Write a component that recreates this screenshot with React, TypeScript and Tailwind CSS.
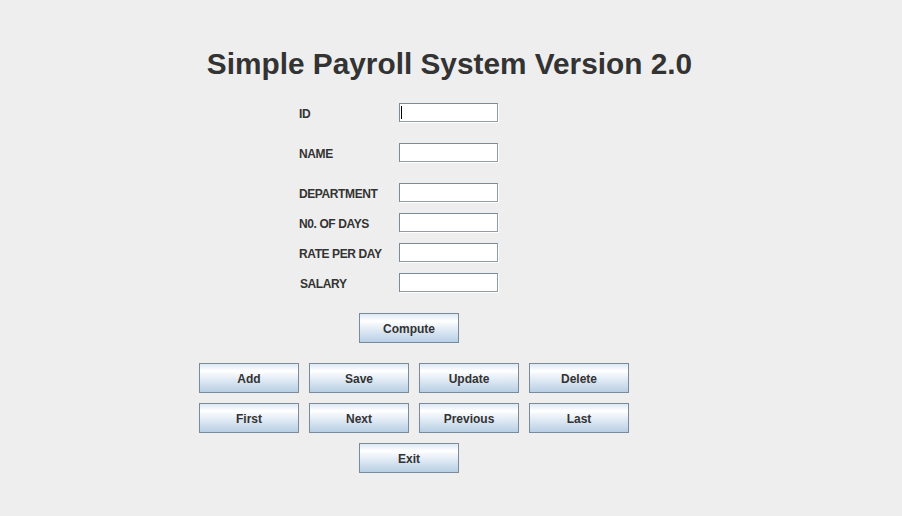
const fields = [
  { label: "ID", mt: "mt-0", caret: true },
  { label: "NAME", mt: "mt-[21px]" },
  { label: "DEPARTMENT", mt: "mt-[21px]" },
  { label: "N0. OF DAYS", mt: "mt-[11px]" },
  { label: "RATE PER DAY", mt: "mt-[11px]" },
  { label: "SALARY", mt: "mt-[11px]", shift: true },
];

function SwingButton({ label }: { label: string }) {
  return (
    <button className="w-[100px] h-[30px] border border-[#7a8a99] bg-[linear-gradient(to_bottom,#dde8f3_0%,#ffffff_25%,#e6eef7_50%,#b8cfe5_100%)] text-[12px] font-bold text-[#333333] flex items-center justify-center pt-px">
      {label}
    </button>
  );
}

export default function App() {
  return (
    <div
      className="w-[902px] h-[516px] bg-[#eeeeee] text-[#333333] overflow-hidden"
      style={{ fontFamily: '"Liberation Sans", Arial, sans-serif' }}
    >
      <h1 className="pt-[47px] text-center text-[29.8px] font-bold leading-[34px] ml-[-3px]">
        Simple Payroll System Version 2.0
      </h1>

      <div className="mt-[22px] pl-[299px] flex flex-col">
        {fields.map((f) => (
          <div key={f.label} className={`flex items-center h-[19px] ${f.mt}`}>
            <span
              className={`w-[100px] pt-[2px] text-[12px] leading-[14px] font-bold tracking-[-0.4px] ${f.shift ? "pl-px" : ""}`}
            >
              {f.label}
            </span>
            <div className="relative w-[99px] h-[19px] bg-white border border-[#7a8a99] border-r-[#8f9dab] border-b-[#8f9dab] shadow-[1px_1px_0_#ffffff]">
              {f.caret && (
                <span className="absolute left-[1px] top-[2px] w-px h-[13px] bg-black" />
              )}
            </div>
          </div>
        ))}
      </div>

      <div className="mt-[21px] pl-[359px]">
        <SwingButton label="Compute" />
      </div>

      <div className="mt-[20px] pl-[199px] flex flex-col gap-[10px]">
        <div className="flex gap-[10px]">
          <SwingButton label="Add" />
          <SwingButton label="Save" />
          <SwingButton label="Update" />
          <SwingButton label="Delete" />
        </div>
        <div className="flex gap-[10px]">
          <SwingButton label="First" />
          <SwingButton label="Next" />
          <SwingButton label="Previous" />
          <SwingButton label="Last" />
        </div>
        <div className="pl-[160px]">
          <SwingButton label="Exit" />
        </div>
      </div>
    </div>
  );
}
